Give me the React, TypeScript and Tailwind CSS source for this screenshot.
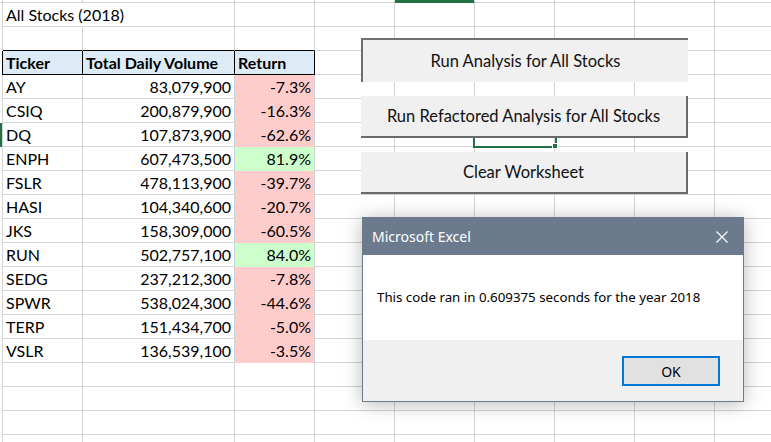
import type { ReactNode } from "react";

const GRID = "border-[#d4d4d4]";

const stocks = [
    { t: "AY", v: "83,079,900", r: "-7.3%" },
    { t: "CSIQ", v: "200,879,900", r: "-16.3%" },
    { t: "DQ", v: "107,873,900", r: "-62.6%" },
    { t: "ENPH", v: "607,473,500", r: "81.9%" },
    { t: "FSLR", v: "478,113,900", r: "-39.7%" },
    { t: "HASI", v: "104,340,600", r: "-20.7%" },
    { t: "JKS", v: "158,309,000", r: "-60.5%" },
    { t: "RUN", v: "502,757,100", r: "84.0%" },
    { t: "SEDG", v: "237,212,300", r: "-7.8%" },
    { t: "SPWR", v: "538,024,300", r: "-44.6%" },
    { t: "TERP", v: "151,434,700", r: "-5.0%" },
    { t: "VSLR", v: "136,539,100", r: "-3.5%" },
];

// the columns after C (D..I)
const rest = ["D", "E", "F", "G", "H", "I"];

function Cell({ className, children }: { className?: string; children?: ReactNode }) {
    return (
        <div className={`h-[24px] shrink-0 border-r border-b ${GRID} px-[3px] leading-[23px] whitespace-nowrap ${className ?? ""}`}>
            {children}
        </div>
    );
}

function Row({ a, b, c, spacer }: { a?: ReactNode; b?: ReactNode; c?: ReactNode; spacer?: string }) {
    return (
        <div className="flex">
            <div className={`h-[24px] w-[3px] shrink-0 border-r ${GRID} ${spacer ?? ""}`} />
            {a}
            {b}
            {c}
            {rest.map((k) => (
                <Cell key={k} className="w-[80px]" />
            ))}
        </div>
    );
}

function SheetButton({ label, className }: { label: string; className: string }) {
    return (
        <div className={`absolute left-[361px] w-[327px] flex items-center justify-center bg-[#f0f0f0] text-[16.5px] text-[#111] ${className}`}>
            {label}
        </div>
    );
}

export default function App() {
    return (
        <div className="relative w-[771px] h-[442px] overflow-hidden bg-white text-black font-['Lato','Liberation_Sans',sans-serif] text-[16px]">
            {/* column header edge */}
            <div className="flex h-[3px]">
                <div className={`w-[3px] shrink-0 border-r border-b ${GRID}`} />
                <div className={`w-[80px] shrink-0 border-r border-b ${GRID}`} />
                <div className={`w-[152px] shrink-0 border-r border-b ${GRID}`} />
                <div className={`w-[80px] shrink-0 border-r border-b ${GRID}`} />
                <div className={`w-[80px] shrink-0 border-r border-b ${GRID}`} />
                <div className="w-[80px] shrink-0 border-r border-b border-r-[#d4d4d4] border-b-[#217346] bg-[#217346]" />
                <div className={`w-[80px] shrink-0 border-r border-b ${GRID}`} />
                <div className={`w-[80px] shrink-0 border-r border-b ${GRID}`} />
                <div className={`w-[80px] shrink-0 border-r border-b ${GRID}`} />
                <div className={`w-[80px] shrink-0 border-r border-b ${GRID}`} />
            </div>

            <Row
                a={<Cell className="w-[80px] border-r-transparent">All Stocks (2018)</Cell>}
                b={<Cell className="w-[152px]" />}
                c={<Cell className="w-[80px]" />}
            />
            <Row
                a={<Cell className="w-[80px] border-b-black" />}
                b={<Cell className="w-[152px] border-b-black" />}
                c={<Cell className="w-[80px] border-b-black" />}
            />
            <Row
                spacer="border-r-black"
                a={<Cell className="w-[80px] border-r-black border-b-black bg-[#ddebf7] font-bold">Ticker</Cell>}
                b={<Cell className="w-[152px] border-r-black border-b-black bg-[#ddebf7] font-bold">Total Daily Volume</Cell>}
                c={<Cell className="w-[80px] border-r-black border-b-black bg-[#ddebf7] font-bold">Return</Cell>}
            />
            {stocks.map((s) => (
                <Row
                    key={s.t}
                    spacer={s.t === "DQ" ? "bg-[#217346]" : ""}
                    a={<Cell className="w-[80px]">{s.t}</Cell>}
                    b={<Cell className="w-[152px] text-right">{s.v}</Cell>}
                    c={
                        <Cell className={`w-[80px] text-right ${s.r.startsWith("-") ? "bg-[#ffcccc] border-b-[#ffcccc]" : "bg-[#ccffcc] border-b-[#ccffcc]"}`}>
                            {s.r}
                        </Cell>
                    }
                />
            ))}
            {[1, 2, 3, 4].map((i) => (
                <Row
                    key={i}
                    a={<Cell className="w-[80px]" />}
                    b={<Cell className="w-[152px]" />}
                    c={<Cell className="w-[80px]" />}
                />
            ))}

            {/* selected cell, mostly hidden behind the buttons */}
            <div className="absolute left-[473px] top-[121px] w-[84px] h-[27px] border-2 border-[#217346]" />
            <div className="absolute left-[552px] top-[143px] w-[6px] h-[6px] bg-[#217346] border border-white" />

            <SheetButton label="Run Analysis for All Stocks" className="top-[38px] h-[44px] border-t-2 border-l-2 border-[#6f6f6f]" />
            <SheetButton label="Run Refactored Analysis for All Stocks" className="top-[96px] h-[42px] border-r-2 border-b-2 border-[#6a6a6a]" />
            <SheetButton label="Clear Worksheet" className="top-[152px] h-[42px] border-r-2 border-b-2 border-[#6a6a6a]" />

            {/* message box */}
            <div className="absolute left-[362px] top-[217px] w-[382px] h-[185px] flex flex-col border border-[#6b7a8d] shadow-[0_2px_18px_rgba(0,0,0,0.28)] font-['Noto_Sans','Open_Sans',sans-serif]">
                <div className="h-[37px] shrink-0 bg-[#6b7a8d] flex items-center justify-between pl-[9px] pr-[15px] text-white text-[14px]">
                    <span>Microsoft Excel</span>
                    <svg width="12" height="12" viewBox="0 0 12 12" fill="none" stroke="white" strokeWidth="1.1">
                        <path d="M0.5 0.5 L11.5 11.5 M11.5 0.5 L0.5 11.5" />
                    </svg>
                </div>
                <div className="h-[85px] shrink-0 bg-white flex items-center pl-[14px] text-[13.3px] text-black">
                    This code ran in 0.609375 seconds for the year 2018
                </div>
                <div className="flex-1 bg-[#f0f0f0] flex justify-end items-start pt-[16px] pr-[23px]">
                    <div className="w-[98px] h-[30px] border-2 border-[#0078d7] bg-[#e1e1e1] flex items-center justify-center text-[14px] text-black">
                        OK
                    </div>
                </div>
            </div>
        </div>
    );
}
